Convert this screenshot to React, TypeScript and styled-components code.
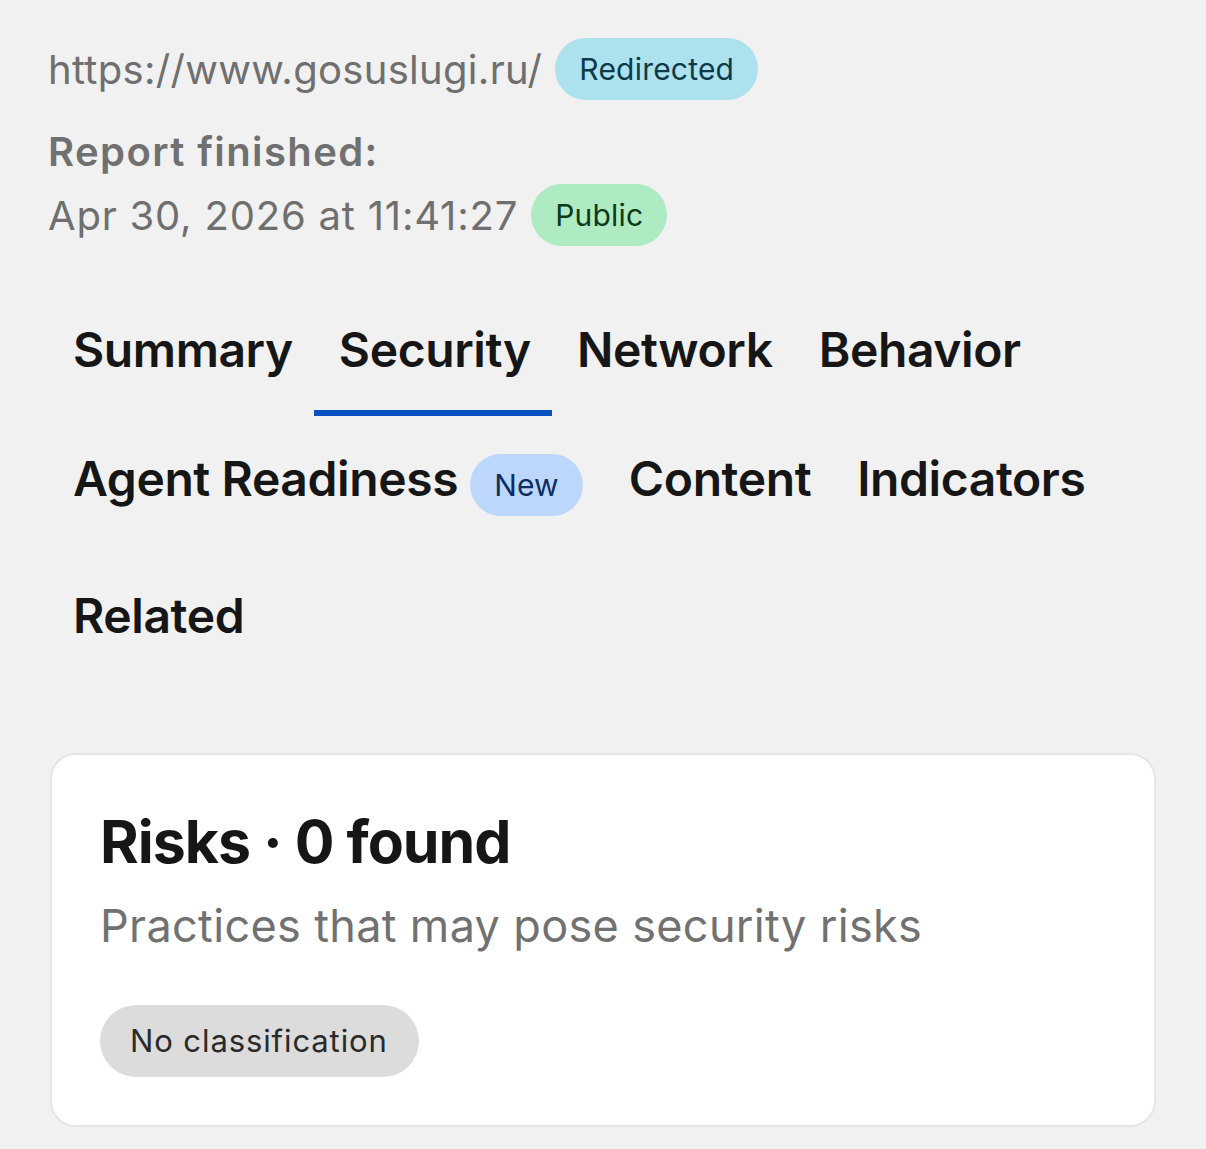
import React from "react";
import styled, { createGlobalStyle } from "styled-components";

const GlobalStyle = createGlobalStyle`
  html, body {
    margin: 0;
    padding: 0;
    background: #f1f1f1;
  }
  body {
    font-family: Inter, "Noto Sans", "Liberation Sans", sans-serif;
    -webkit-font-smoothing: antialiased;
  }
`;

const Page = styled.div`
  display: flex;
  flex-direction: column;
  padding: 38px 50px 0 48px;
  min-height: 1149px;
  box-sizing: border-box;
  background: #f1f1f1;
`;

const Header = styled.header`
  display: flex;
  flex-direction: column;
`;

const Row = styled.div`
  display: flex;
  align-items: center;
  gap: 13px;
`;

const MetaText = styled.span<{ $spacing?: number }>`
  font-size: 40px;
  color: #6f6f6f;
  font-weight: 400;
  letter-spacing: ${(p) => p.$spacing ?? 0.3}px;
`;

const Label = styled.div`
  margin-top: 28px;
  font-size: 40px;
  font-weight: 600;
  color: #707070;
  line-height: 47px;
  letter-spacing: 1.4px;
`;

const DateRow = styled(Row)`
  margin-top: 9px;
`;

type Tone = "cyan" | "green" | "blue" | "gray";

const toneBg: Record<Tone, string> = {
  cyan: "#ade1ee",
  green: "#aeeac2",
  blue: "#bcd7fb",
  gray: "#dcdcdc",
};
const toneFg: Record<Tone, string> = {
  cyan: "#0b3a49",
  green: "#0e3a1b",
  blue: "#0c2e63",
  gray: "#2a2a2a",
};

const Badge = styled.span<{ $tone: Tone }>`
  display: inline-block;
  font-size: 30px;
  line-height: 36px;
  padding: 13px 24px;
  border-radius: 999px;
  background: ${(p) => toneBg[p.$tone]};
  color: ${(p) => toneFg[p.$tone]};
  font-weight: 400;
  letter-spacing: 0.2px;
  white-space: nowrap;
`;

const Tabs = styled.nav`
  display: flex;
  flex-wrap: wrap;
  align-items: stretch;
  margin-top: 41px;
`;

const Tab = styled.div<{ $active?: boolean }>`
  display: flex;
  align-items: baseline;
  gap: 12px;
  padding: 34px 21px 31px 25px;
  font-size: 48px;
  line-height: 58px;
  font-weight: 600;
  letter-spacing: -0.4px;
  color: #161616;
  border-bottom: 6px solid ${(p) => (p.$active ? "#0b50c0" : "transparent")};
  box-sizing: border-box;
`;

const Card = styled.section`
  margin-top: 71px;
  margin-left: 2px;
  background: #ffffff;
  border: 2px solid #e6e6e6;
  border-radius: 26px;
  padding: 50px 48px 48px;
  display: flex;
  flex-direction: column;
  align-items: flex-start;
`;

const CardTitle = styled.h2`
  margin: 0;
  font-size: 59px;
  line-height: 73px;
  font-weight: 700;
  letter-spacing: -1px;
  color: #161616;
`;

const CardSub = styled.p`
  margin: 21px 0 0;
  font-size: 45px;
  line-height: 54px;
  color: #717171;
  font-weight: 400;
  letter-spacing: 0.35px;
`;

const Pill = styled(Badge)`
  margin-top: 52px;
  padding: 17px 31px 18px 30px;
  font-size: 31px;
  line-height: 37px;
  letter-spacing: 0.9px;
`;

const tabs = [
  { label: "Summary" },
  { label: "Security", active: true },
  { label: "Network" },
  { label: "Behavior" },
  { label: "Agent Readiness", badge: "New" },
  { label: "Content" },
  { label: "Indicators" },
  { label: "Related" },
];

export default function App() {
  return (
    <>
      <GlobalStyle />
      <Page>
        <Header>
          <Row>
            <MetaText $spacing={0.3}>https://www.gosuslugi.ru/</MetaText>
            <Badge $tone="cyan">Redirected</Badge>
          </Row>
          <Label>Report finished:</Label>
          <DateRow>
            <MetaText $spacing={0.8}>Apr 30, 2026 at 11:41:27</MetaText>
            <Badge $tone="green">Public</Badge>
          </DateRow>
        </Header>
        <Tabs>
          {tabs.map((t) => (
            <Tab key={t.label} $active={t.active}>
              <span>{t.label}</span>
              {t.badge && <Badge $tone="blue">{t.badge}</Badge>}
            </Tab>
          ))}
        </Tabs>
        <Card>
          <CardTitle>Risks · 0 found</CardTitle>
          <CardSub>Practices that may pose security risks</CardSub>
          <Pill $tone="gray">No classification</Pill>
        </Card>
      </Page>
    </>
  );
}
